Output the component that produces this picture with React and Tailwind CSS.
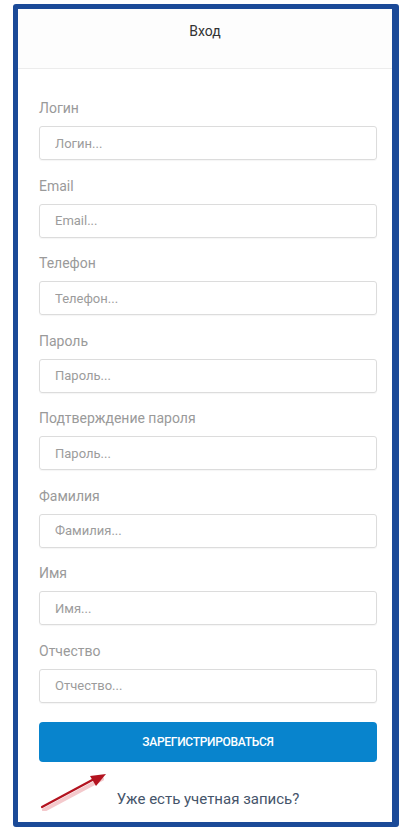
import React from "react";

const fields = [
  { label: "Логин", placeholder: "Логин..." },
  { label: "Email", placeholder: "Email..." },
  { label: "Телефон", placeholder: "Телефон..." },
  { label: "Пароль", placeholder: "Пароль..." },
  { label: "Подтверждение пароля", placeholder: "Пароль..." },
  { label: "Фамилия", placeholder: "Фамилия..." },
  { label: "Имя", placeholder: "Имя..." },
  { label: "Отчество", placeholder: "Отчество..." },
];

export default function App() {
  return (
    <div
      className="h-[834px] w-[402px] bg-white pt-[4px] pl-[13px]"
      style={{ fontFamily: "Roboto, 'Noto Sans', sans-serif" }}
    >
      <div className="relative flex h-[823px] w-[386px] flex-col rounded-[3px] border-[5px] border-r-[7px] border-[#1b4a98] bg-white">
        {/* header */}
        <div className="flex h-[60px] items-center justify-center border-b border-[#ececec] bg-[#fdfdfd] pb-[14px] text-[14px] text-[#333]">
          Вход
        </div>

        <div className="flex flex-col pl-[21px] pr-[15px] pt-[29px]">
          {fields.map((f) => (
            <div key={f.label} className="mb-[15.5px] flex flex-col">
              <label className="h-[20px] text-[14px] leading-[20px] text-[#9a9a9a]">{f.label}</label>
              <input
                className="mt-[8px] h-[34px] rounded-[3px] border border-[#dcdcdc] px-[15px] text-[13px] text-[#555] shadow-[0_1px_1px_rgba(0,0,0,0.04)] outline-none placeholder:text-[#9c9c9c]"
                placeholder={f.placeholder}
              />
            </div>
          ))}

          <button className="mt-[4px] flex h-[40px] items-center justify-center rounded-[4px] bg-[#0884cd] text-[12px] font-medium uppercase tracking-[-0.3px] text-white">
            Зарегистрироваться
          </button>

          <div className="mt-[26px] text-center text-[15px] text-[#45546a]">
            Уже есть учетная запись?
          </div>
        </div>

        {/* red arrow annotation */}
        <svg
          className="absolute left-[20px] top-[758px]"
          width="70"
          height="44"
          viewBox="0 0 70 44"
        >
          <line x1="4" y1="40" x2="62" y2="9" stroke="#f4c9cc" strokeWidth="4" strokeLinecap="round" transform="translate(2,3)" />
          <line x1="4" y1="40" x2="58" y2="11" stroke="#b3131f" strokeWidth="2.2" strokeLinecap="round" />
          <polygon points="68,7 52,9 58,19" fill="#b3131f" />
        </svg>
      </div>
    </div>
  );
}
